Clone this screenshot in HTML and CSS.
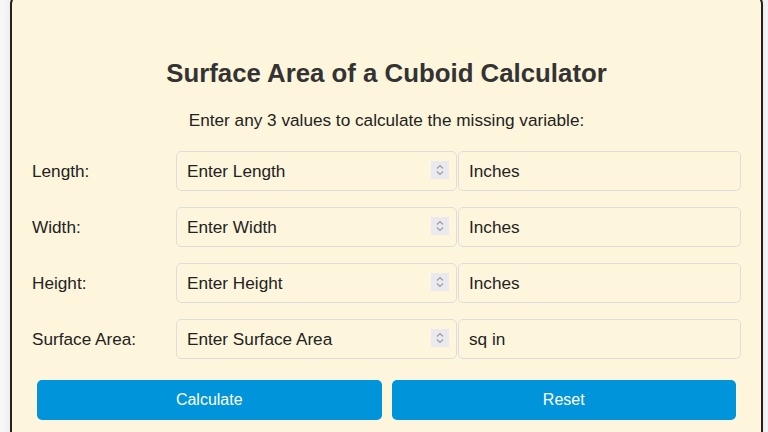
FILE: index.html
```html
<!DOCTYPE html>
<html lang="en">
<head>
<meta charset="utf-8">
<title>Surface Area of a Cuboid Calculator</title>
<link rel="stylesheet" href="styles.css">
</head>
<body>
<div class="card">
  <h1 class="title">Surface Area of a Cuboid Calculator</h1>
  <p class="intro">Enter any 3 values to calculate the missing variable:</p>
  <div class="form">
    <label class="label" for="len">Length:</label>
    <div class="field">
      <input class="num" id="len" type="number" placeholder="Enter Length">
      <span class="spin"><svg viewBox="0 0 18 18" width="18" height="18"><path d="M6 7.5 9 4.5 12 7.5M6 10.5 9 13.5 12 10.5" fill="none" stroke="#9a9aa2" stroke-width="1.1"/></svg></span>
    </div>
    <input class="unit" type="text" value="Inches">

    <label class="label" for="wid">Width:</label>
    <div class="field">
      <input class="num" id="wid" type="number" placeholder="Enter Width">
      <span class="spin"><svg viewBox="0 0 18 18" width="18" height="18"><path d="M6 7.5 9 4.5 12 7.5M6 10.5 9 13.5 12 10.5" fill="none" stroke="#9a9aa2" stroke-width="1.1"/></svg></span>
    </div>
    <input class="unit" type="text" value="Inches">

    <label class="label" for="hei">Height:</label>
    <div class="field">
      <input class="num" id="hei" type="number" placeholder="Enter Height">
      <span class="spin"><svg viewBox="0 0 18 18" width="18" height="18"><path d="M6 7.5 9 4.5 12 7.5M6 10.5 9 13.5 12 10.5" fill="none" stroke="#9a9aa2" stroke-width="1.1"/></svg></span>
    </div>
    <input class="unit" type="text" value="Inches">

    <label class="label" for="sa">Surface Area:</label>
    <div class="field">
      <input class="num" id="sa" type="number" placeholder="Enter Surface Area">
      <span class="spin"><svg viewBox="0 0 18 18" width="18" height="18"><path d="M6 7.5 9 4.5 12 7.5M6 10.5 9 13.5 12 10.5" fill="none" stroke="#9a9aa2" stroke-width="1.1"/></svg></span>
    </div>
    <input class="unit" type="text" value="sq in">
  </div>
  <div class="buttons">
    <button class="btn" type="button">Calculate</button>
    <button class="btn" type="button">Reset</button>
  </div>
</div>
</body>
</html>
```
FILE: styles.css
```css
html, body {
  margin: 0;
  padding: 0;
  background: #f7f7f7;
  font-family: "Liberation Sans", Arial, sans-serif;
  color: #222;
}

.card {
  box-sizing: border-box;
  width: 753px;
  margin: -6px 0 0 10px;
  padding: 40px 20px 30px;
  background: #fef6dc;
  border: 2px solid #222;
  border-radius: 10px;
  box-shadow: 0 0 10px rgba(0, 0, 0, 0.08);
}

.title {
  margin: 22px 0 0;
  text-align: center;
  font-size: 25.8px;
  font-weight: bold;
  color: #333;
  line-height: 30px;
}

.intro {
  margin: 22px 0 0;
  text-align: center;
  font-size: 17.2px;
  line-height: 20px;
  color: #222;
}

.form {
  display: grid;
  grid-template-columns: 143px 281px 1fr;
  column-gap: 1px;
  row-gap: 16px;
  align-items: center;
  margin-top: 21px;
}

.label {
  font-size: 17.2px;
  color: #222;
}

.field {
  position: relative;
  display: flex;
}

.num, .unit {
  box-sizing: border-box;
  width: 100%;
  height: 40px;
  margin: 0;
  padding: 0 10px;
  border: 1px solid #ddd;
  border-radius: 5px;
  background: #fef6dc;
  font-family: "Liberation Sans", Arial, sans-serif;
  font-size: 17.2px;
  color: #222;
  outline: none;
}

.num {
  -moz-appearance: textfield;
}

.num::-webkit-inner-spin-button,
.num::-webkit-outer-spin-button {
  -webkit-appearance: none;
  margin: 0;
}

.num::placeholder {
  color: #222;
  opacity: 1;
}

.spin {
  position: absolute;
  top: 10px;
  right: 8px;
  width: 18px;
  height: 18px;
  background: #e9e9ef;
  pointer-events: none;
}

.spin svg {
  display: block;
}

.buttons {
  display: flex;
  margin-top: 16px;
}

.btn {
  flex: 1;
  margin: 5px;
  height: 40px;
  border: none;
  border-radius: 5px;
  background: #0095da;
  color: #fff;
  font-family: "Liberation Sans", Arial, sans-serif;
  font-size: 16px;
}
```
